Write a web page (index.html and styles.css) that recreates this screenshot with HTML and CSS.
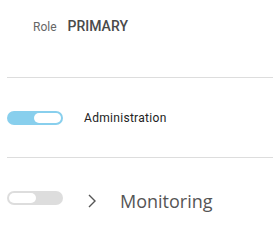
FILE: index.html
```html
<!DOCTYPE html>
<html lang="en">
<head>
    <meta charset="UTF-8">
    <title>Roles</title>
    <link rel="stylesheet" href="styles.css">
</head>
<body>
    <div class="panel">
        <div class="role-row">
            <span class="role-label">Role</span>
            <span class="role-value">PRIMARY</span>
        </div>
        <div class="row">
            <span class="toggle on"><span class="knob"></span></span>
            <span class="row-name">Administration</span>
        </div>
        <div class="row">
            <span class="toggle"><span class="knob"></span></span>
            <svg class="chevron" width="10" height="16" viewBox="0 0 10 16">
                <path d="M2 2 L8 8 L2 14" fill="none" stroke="#555" stroke-width="1.4"/>
            </svg>
            <span class="row-name big">Monitoring</span>
        </div>
    </div>
</body>
</html>
```

FILE: styles.css
```css
* {
    box-sizing: border-box;
    margin: 0;
    padding: 0;
}
body {
    background: #ffffff;
    font-family: 'Roboto', 'Helvetica Neue', Arial, sans-serif;
    width: 273px;
    height: 241px;
    overflow: hidden;
}
.panel {
    padding-left: 7px;
}
.role-row {
    display: flex;
    align-items: baseline;
    gap: 11px;
    height: 78px;
    padding: 18px 0 0 26px;
    border-bottom: 1px solid #dddddd;
}
.role-label {
    color: #666666;
    font-size: 12px;
}
.role-value {
    color: #4a4a4a;
    font-size: 14px;
    font-weight: 500;
}
.row {
    display: flex;
    align-items: center;
    height: 80px;
    border-bottom: 1px solid #dddddd;
}
.row:last-child {
    border-bottom: none;
}
.toggle {
    background: #dddddd;
    border-radius: 7px;
    display: flex;
    height: 14px;
    padding: 2px;
    width: 56px;
}
.toggle.on {
    background: #88cfed;
    justify-content: flex-end;
}
.knob {
    background: #ffffff;
    border-radius: 5px;
    height: 10px;
    width: 27px;
}
.row-name {
    color: #222222;
    font-size: 12px;
    letter-spacing: 0.3px;
    margin-left: 21px;
}
.chevron {
    margin-left: 24px;
    margin-top: 6px;
}
.row-name.big {
    color: #555555;
    font-family: 'Open Sans', Arial, sans-serif;
    font-size: 18px;
    letter-spacing: 0;
    margin-left: 23px;
    margin-top: 5px;
}
```
